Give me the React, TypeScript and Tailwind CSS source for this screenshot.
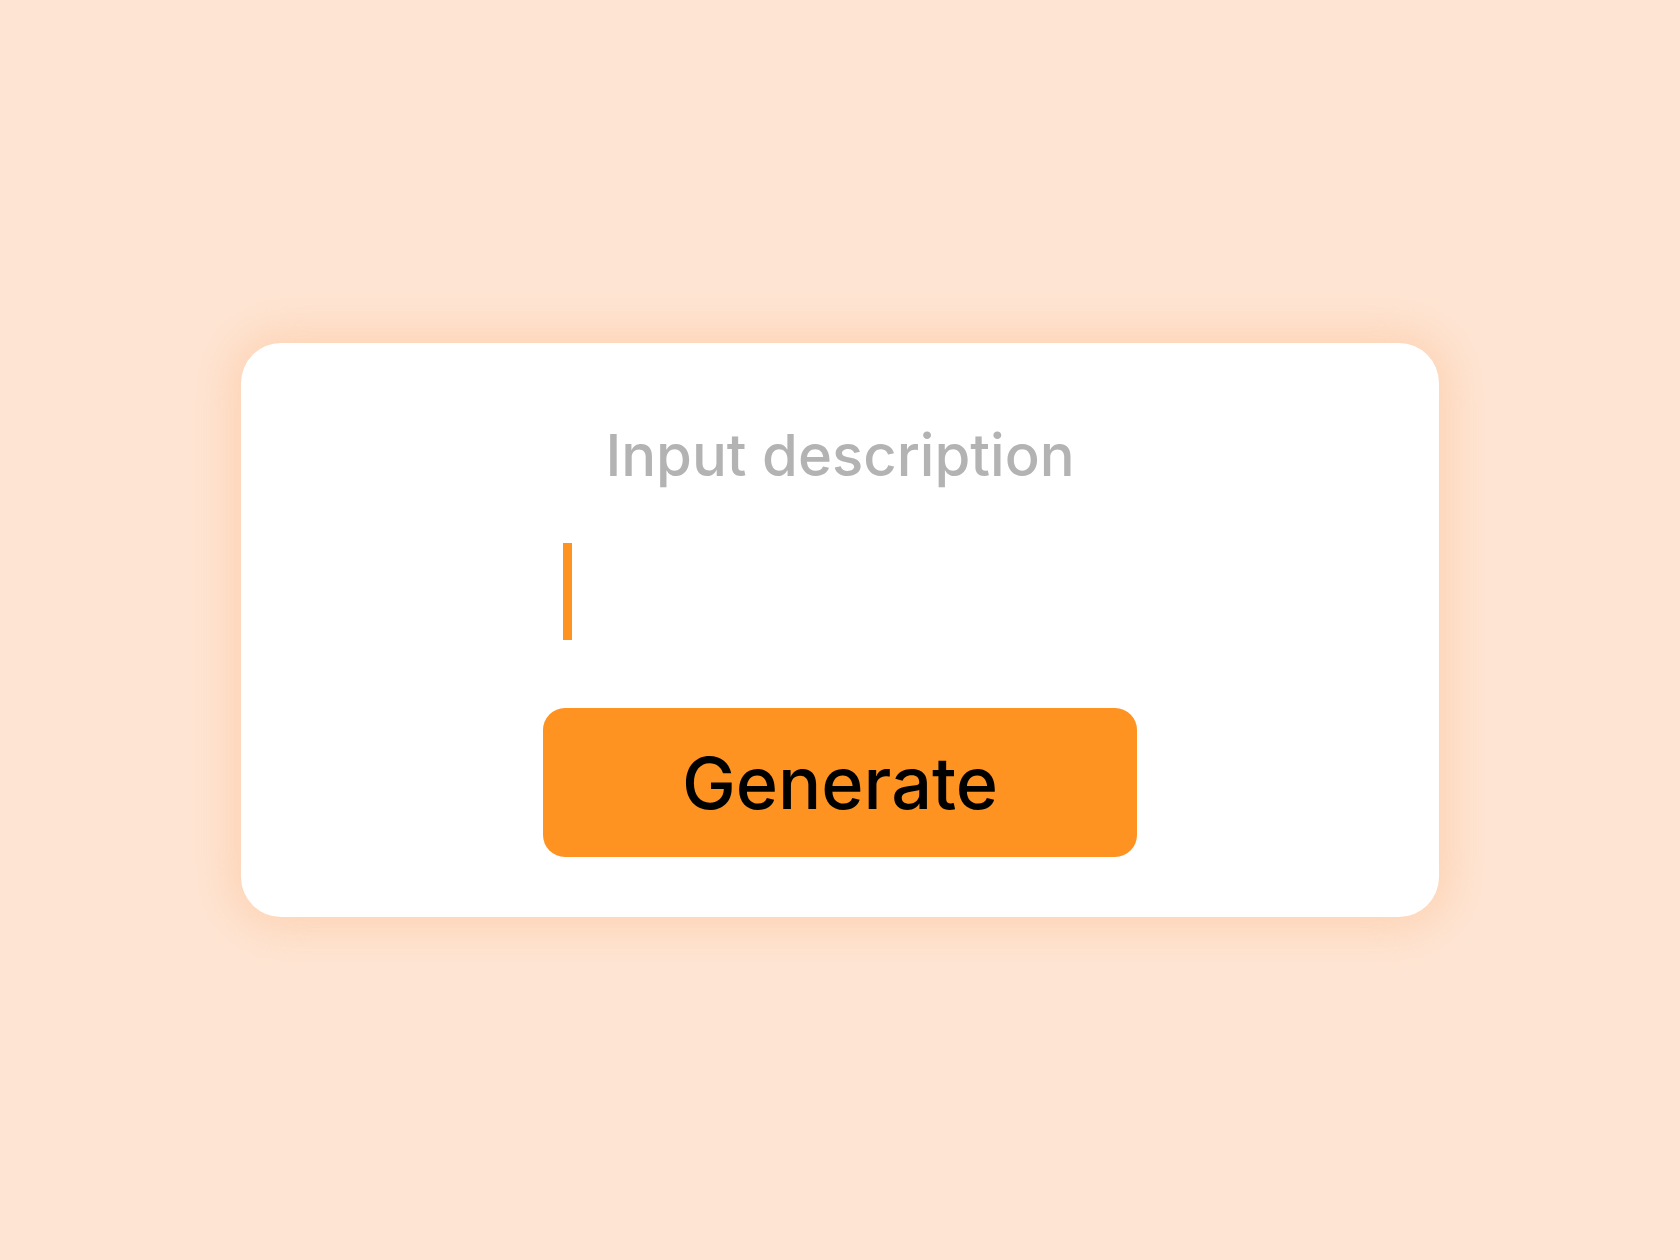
export default function App() {
  return (
    <div className="flex min-h-[1260px] w-full items-center justify-center bg-[#fee5d3] font-['Inter','Open_Sans',sans-serif]">
      <div className="flex h-[574px] w-[1198px] flex-col items-center rounded-[40px] bg-white pt-[83px] shadow-[0_0_40px_12px_rgba(253,196,156,0.55)]">
        <p className="text-[58px] leading-none font-medium text-[#b3b3b3]">Input description</p>
        <div className="mt-[59px] flex w-[594px] flex-col">
          <div className="ml-5 h-[97px] w-[9px] bg-[#fe9322]" />
          <button className="mt-[68px] flex h-[149px] w-[594px] items-center justify-center rounded-[22px] bg-[#fe9322] text-[72px] font-medium text-black">
            Generate
          </button>
        </div>
      </div>
    </div>
  );
}
